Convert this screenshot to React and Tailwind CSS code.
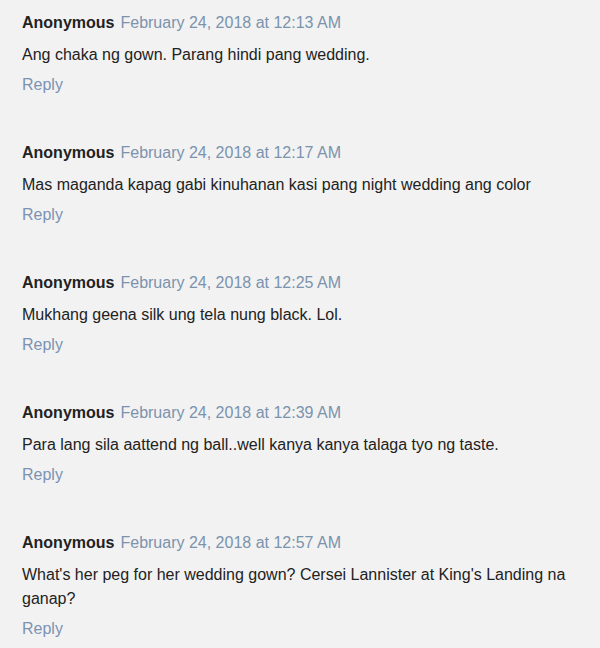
import React from 'react';

const comments = [
  { time: '12:13 AM', body: 'Ang chaka ng gown. Parang hindi pang wedding.' },
  { time: '12:17 AM', body: 'Mas maganda kapag gabi kinuhanan kasi pang night wedding ang color' },
  { time: '12:25 AM', body: 'Mukhang geena silk ung tela nung black. Lol.' },
  { time: '12:39 AM', body: "Para lang sila aattend ng ball..well kanya kanya talaga tyo ng taste." },
  { time: '12:57 AM', body: "What's her peg for her wedding gown? Cersei Lannister at King's Landing na ganap?" },
];

const Comment = ({ time, body }) => (
  <div className="pt-[8px] pb-[33px]">
    <div className="flex items-baseline gap-[6px] leading-[30px]">
      <span className="font-bold text-[#222]">Anonymous</span>
      <span className="text-[#7b93ad]">February 24, 2018 at {time}</span>
    </div>
    <p className="mt-[5px] leading-[24px] text-[#222]">{body}</p>
    <div className="mt-[6px] leading-[24px] text-[#7c93b3]">Reply</div>
  </div>
);

export default function App() {
  return (
    <div className="w-[600px] h-[648px] overflow-hidden bg-[#f2f2f2] font-['Liberation_Sans',Arial,sans-serif] text-[16px]">
      <div className="pl-[22px] w-[584px]">
        {comments.map((c) => (
          <Comment key={c.time} {...c} />
        ))}
      </div>
    </div>
  );
}
